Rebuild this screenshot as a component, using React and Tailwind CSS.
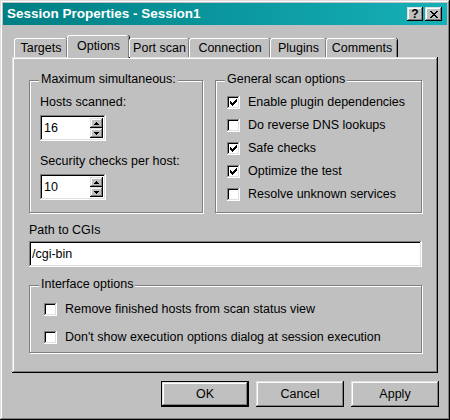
const raised =
  'shadow-[inset_-1px_-1px_#000,inset_1px_1px_#dfdfdf,inset_-2px_-2px_#808080,inset_2px_2px_#fff]';
const sunken =
  'shadow-[inset_-1px_-1px_#fff,inset_1px_1px_#808080,inset_-2px_-2px_#dfdfdf,inset_2px_2px_#000]';

const tabs = [
  { label: 'Targets', w: 'w-[53px]' },
  { label: 'Options', w: 'w-[62px]', active: true },
  { label: 'Port scan', w: 'w-[60px]' },
  { label: 'Connection', w: 'w-[81px]' },
  { label: 'Plugins', w: 'w-[56px]' },
  { label: 'Comments', w: 'w-[71px]' },
];

const scanOptions = [
  { label: 'Enable plugin dependencies', checked: true },
  { label: 'Do reverse DNS lookups', checked: false },
  { label: 'Safe checks', checked: true },
  { label: 'Optimize the test', checked: true },
  { label: 'Resolve unknown services', checked: false },
];

const Checkbox = ({ checked }) => (
  <span className={`w-[13px] h-[13px] bg-white shrink-0 flex items-center justify-center ${sunken}`}>
    {checked && (
      <svg width="7" height="7" viewBox="0 0 7 7" shapeRendering="crispEdges">
        <path d="M0 2h1v3H0zM1 3h1v3H1zM2 4h1v3H2zM3 3h1v3H3zM4 2h1v3H4zM5 1h1v3H5zM6 0h1v3H6z" fill="#000" />
      </svg>
    )}
  </span>
);

const Group = ({ legend, className, children }) => (
  <div className={`relative border border-[#808080] shadow-[inset_1px_1px_#fff,1px_1px_#fff] ${className}`}>
    <span className="absolute left-[9px] -top-[9px] px-[2px] bg-[#c0c0c0] leading-[15px]">{legend}</span>
    {children}
  </div>
);

const Spinner = ({ value }) => (
  <div className={`w-[66px] h-[26px] bg-white flex items-center justify-between pl-[4px] pr-[3px] ${sunken}`}>
    <span className="leading-[15px]">{value}</span>
    <div className="flex flex-col w-[13px]">
      {['up', 'down'].map((d) => (
        <span key={d} className={`h-[10px] bg-[#c0c0c0] flex items-center justify-center ${raised}`}>
          <svg width="5" height="3" viewBox="0 0 5 3" shapeRendering="crispEdges">
            {d === 'up' ? (
              <path d="M2 0h1v1H2zM1 1h3v1H1zM0 2h5v1H0z" fill="#000" />
            ) : (
              <path d="M0 0h5v1H0zM1 1h3v1H1zM2 2h1v1H2z" fill="#000" />
            )}
          </svg>
        </span>
      ))}
    </div>
  </div>
);

const Button = ({ children, isDefault }) => (
  <button
    className={`w-[88px] h-[26px] bg-[#c0c0c0] flex items-center justify-center leading-[15px] ${
      isDefault ? 'border border-black' : ''
    } ${raised}`}
  >
    {children}
  </button>
);

export default function App() {
  return (
    <div
      className={`w-[450px] h-[420px] bg-[#c0c0c0] p-[3px] text-[12.5px] text-black ${raised}`}
      style={{ fontFamily: '"Liberation Sans", Arial, sans-serif' }}
    >
      <div className="h-[22px] bg-gradient-to-r from-[#007f84] to-[#16b0b8] flex items-center justify-between pl-[4px] pr-[5px]">
        <span className="text-white font-bold text-[13.5px] leading-[16px]">Session Properties - Session1</span>
        <div className="flex gap-[2px]">
          <span className={`w-[16px] h-[14px] bg-[#c0c0c0] flex items-center justify-center font-bold text-[12px] leading-[12px] ${raised}`}>
            ?
          </span>
          <span className={`w-[17px] h-[14px] bg-[#c0c0c0] flex items-center justify-center ${raised}`}>
            <svg width="8" height="7" viewBox="0 0 8 7" shapeRendering="crispEdges">
              <path d="M0 0h2v1H0zM6 0h2v1H6zM1 1h2v1H1zM5 1h2v1H5zM2 2h4v1H2zM3 3h2v1H3zM2 4h4v1H2zM1 5h2v1H1zM5 5h2v1H5zM0 6h2v1H0zM6 6h2v1H6z" fill="#000" />
            </svg>
          </span>
        </div>
      </div>

      <div className="ml-[9px] mt-[10px]">
        <div className="flex items-end h-[22px] pl-[2px] relative z-10">
          {tabs.map((t) => (
            <div
              key={t.label}
              className={`${t.w} flex items-center justify-center rounded-t-[3px] border-t border-l border-white shadow-[inset_-1px_0_#808080,1px_0_#000] ${
                t.active ? 'h-[23px] bg-[#c0c0c0] -mb-[1px] pb-[2px]' : 'h-[19px]'
              }`}
            >
              <span className="leading-[15px]">{t.label}</span>
            </div>
          ))}
        </div>

        <div className={`w-[426px] h-[316px] pl-[17px] pr-[16px] pt-[23px] ${raised}`}>
          <div className="flex gap-[12px]">
            <Group legend="Maximum simultaneous:" className="w-[174px] h-[133px] flex flex-col pl-[10px] pt-[14px]">
              <span className="leading-[15px]">Hosts scanned:</span>
              <div className="mt-[5px]">
                <Spinner value="16" />
              </div>
              <span className="leading-[15px] mt-[13px]">Security checks per host:</span>
              <div className="mt-[5px]">
                <Spinner value="10" />
              </div>
            </Group>
            <Group legend="General scan options" className="flex-1 h-[133px] pt-[10px] pl-[11px]">
              {scanOptions.map((o) => (
                <div key={o.label} className="h-[23px] flex items-center gap-[8px]">
                  <Checkbox checked={o.checked} />
                  <span className="leading-[15px]">{o.label}</span>
                </div>
              ))}
            </Group>
          </div>

          <div className="mt-[10px] leading-[15px]">Path to CGIs</div>
          <div className={`mt-[3px] h-[26px] bg-white flex items-center pl-[3px] ${sunken}`}>
            <span className="leading-[15px]">/cgi-bin</span>
          </div>

          <Group legend="Interface options" className="mt-[18px] h-[68px] pt-[9px] pl-[14px]">
            {[
              'Remove finished hosts from scan status view',
              "Don't show execution options dialog at session execution",
            ].map((l) => (
              <div key={l} className="h-[28px] flex items-center gap-[8px]">
                <Checkbox checked={false} />
                <span className="leading-[15px]">{l}</span>
              </div>
            ))}
          </Group>
        </div>
      </div>

      <div className="flex justify-end gap-[7px] pr-[8px] mt-[8px]">
        <Button isDefault>OK</Button>
        <Button>Cancel</Button>
        <Button>Apply</Button>
      </div>
    </div>
  );
}
